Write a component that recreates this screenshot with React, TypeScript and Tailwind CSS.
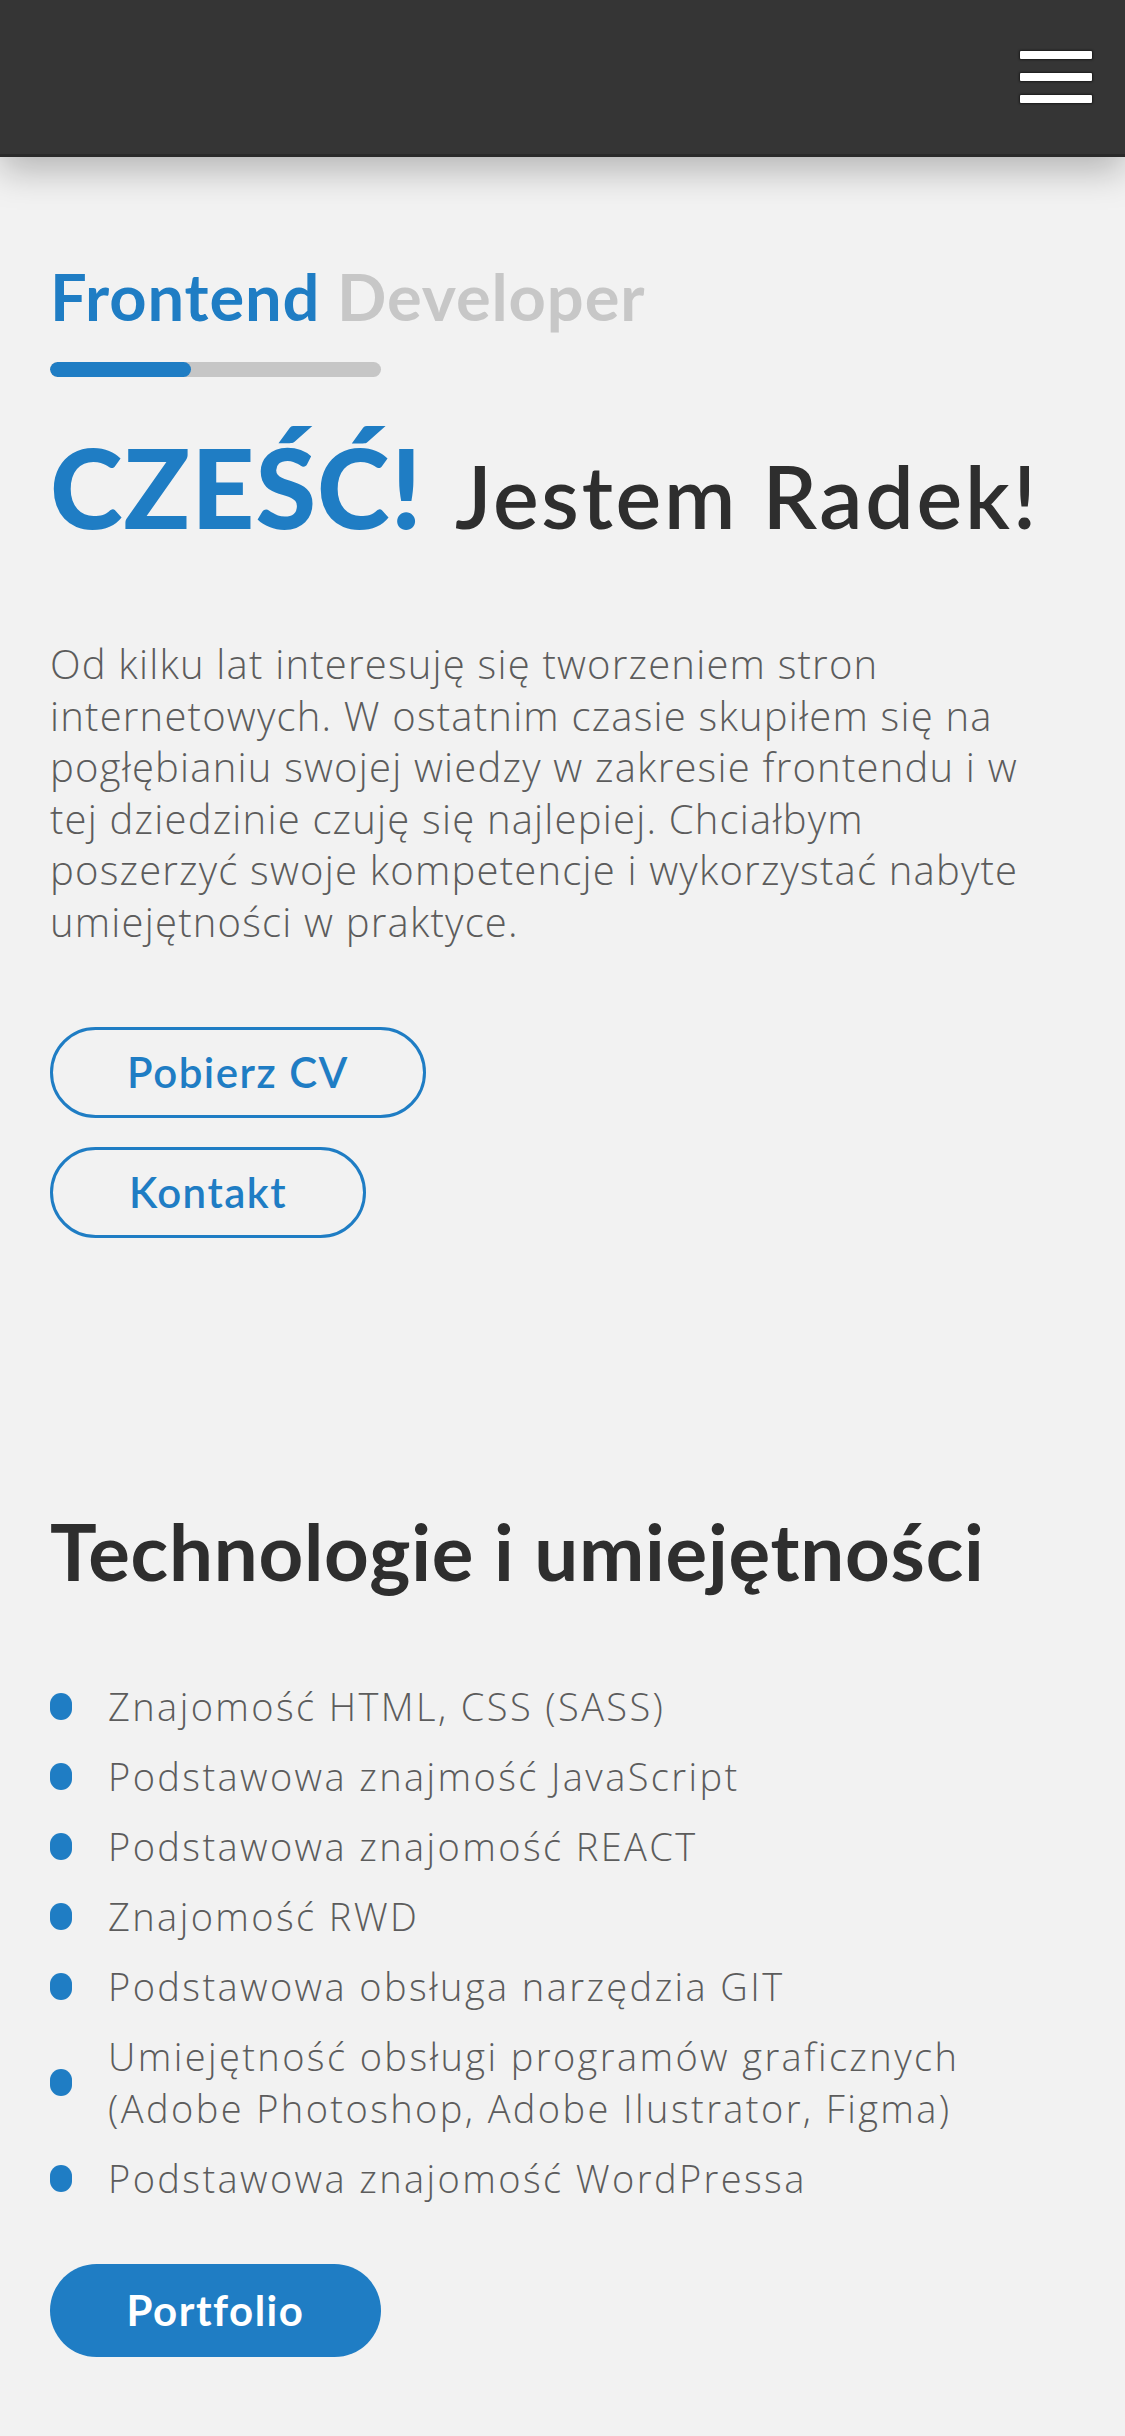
import React from "react";

const items: string[][] = [
  ["Znajomość HTML, CSS (SASS)"],
  ["Podstawowa znajmość JavaScript"],
  ["Podstawowa znajomość REACT"],
  ["Znajomość RWD"],
  ["Podstawowa obsługa narzędzia GIT"],
  ["Umiejętność obsługi programów graficznych", "(Adobe Photoshop, Adobe Ilustrator, Figma)"],
  ["Podstawowa znajomość WordPressa"],
];

const paragraph = [
  "Od kilku lat interesuję się tworzeniem stron",
  "internetowych. W ostatnim czasie skupiłem się na",
  "pogłębianiu swojej wiedzy w zakresie frontendu i w",
  "tej dziedzinie czuję się najlepiej. Chciałbym",
  "poszerzyć swoje kompetencje i wykorzystać nabyte",
  "umiejętności w praktyce.",
];

export default function App() {
  return (
    <div className="min-h-[2436px] bg-[#f2f2f2] font-['Lato','Open_Sans',sans-serif]">
      <header className="relative z-10 flex h-[157px] items-center justify-end border-b-[3px] border-[#2a2a2a] bg-[#353535] pr-[33px] shadow-[0_14px_34px_rgba(0,0,0,0.25)]">
        <button aria-label="menu" className="flex w-[72px] flex-col gap-[14px]">
          <span className="block h-[8px] w-full rounded-[1px] bg-white shadow-[0_0_2px_1px_rgba(0,0,0,0.5)]" />
          <span className="block h-[8px] w-full rounded-[1px] bg-white shadow-[0_0_2px_1px_rgba(0,0,0,0.5)]" />
          <span className="block h-[8px] w-full rounded-[1px] bg-white shadow-[0_0_2px_1px_rgba(0,0,0,0.5)]" />
        </button>
      </header>

      <main className="px-[50px]">
        <section className="pt-[107px]">
          <h2 className="text-[65px] font-bold leading-[65px] tracking-[0.9px]">
            <span className="text-[#1f7dc4]">Frontend</span>{" "}
            <span className="text-[#c7c7c7]">Developer</span>
          </h2>
          <div className="mt-[33px] flex h-[15px] w-[331px] overflow-hidden rounded-full bg-[#c6c6c6]">
            <div className="h-full w-[141px] rounded-full bg-[#1f7dc4]" />
          </div>
          <h1 className="mt-[54px] text-[110px] leading-[110px] whitespace-nowrap">
            <span className="font-black tracking-[1px] text-[#1f7dc4]">CZEŚĆ!</span>
            <span className="ml-[32px] text-[86px] font-semibold leading-[86px] tracking-[2.8px] text-[#2e2e2e]">Jestem Radek!</span>
          </h1>
          <p className="mt-[97px] font-['Open_Sans','Lato',sans-serif] text-[40px] font-light leading-[51.5px] tracking-[1.2px] text-[#5c5c5c]">
            {paragraph.map((l, i) => (
              <React.Fragment key={i}>
                {l}
                {i < paragraph.length - 1 && <br />}
              </React.Fragment>
            ))}
          </p>
          <div className="mt-[80px] flex flex-col items-start gap-[29px]">
            <button className="flex h-[91px] w-[376px] items-center justify-center rounded-full border-[3px] border-[#1f7dc4] text-[42px] font-semibold tracking-[1.5px] text-[#1f7dc4]">
              Pobierz CV
            </button>
            <button className="flex h-[91px] w-[316px] items-center justify-center rounded-full border-[3px] border-[#1f7dc4] text-[42px] font-semibold tracking-[1.5px] text-[#1f7dc4]">
              Kontakt
            </button>
          </div>
        </section>

        <section className="pt-[274px] pb-[80px]">
          <h2 className="text-[78px] font-bold leading-[78px] tracking-[0.75px] text-[#2e2e2e]">Technologie i umiejętności</h2>
          <ul className="mt-[90px] flex flex-col gap-[18px]">
            {items.map((lines, i) => (
              <li key={i} className="flex items-center">
                <span className="block h-[27px] w-[22px] shrink-0 rounded-full bg-[#1f7dc4]" />
                <span className="ml-[36px] font-['Open_Sans','Lato',sans-serif] text-[38px] font-light leading-[52px] tracking-[2.4px] text-[#5c5c5c]">
                  {lines.map((l, j) => (
                    <React.Fragment key={j}>
                      {l}
                      {j < lines.length - 1 && <br />}
                    </React.Fragment>
                  ))}
                </span>
              </li>
            ))}
          </ul>
          <button className="mt-[60px] flex h-[93px] w-[331px] items-center justify-center rounded-full bg-[#1f7dc4] text-[42px] font-bold tracking-[1.5px] text-white">
            Portfolio
          </button>
        </section>
      </main>
    </div>
  );
}
